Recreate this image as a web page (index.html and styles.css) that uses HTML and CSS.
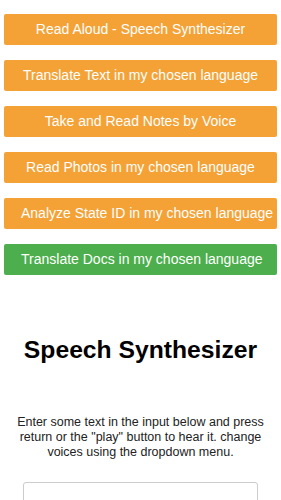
FILE: index.html
```html
<!DOCTYPE html>
<html lang="en">
<head>
  <meta charset="UTF-8" />
  <title>Speech Synthesizer</title>
  <meta name="viewport" content="width=device-width, initial-scale=1.0" />
  <link rel="stylesheet" href="styles.css">
</head>
<body>
  <!-- Nav buttons -->
  <div class="menu">
    <a class="btn" href="#">Read Aloud - Speech Synthesizer</a>
    <a class="btn" href="#">Translate Text in my chosen language</a>
    <a class="btn" href="#">Take and Read Notes by Voice</a>
    <a class="btn" href="#">Read Photos in my chosen language</a>
    <a class="btn" href="#">Analyze State ID in my chosen language</a>
    <a class="btn active" href="#">Translate Docs in my chosen language</a>
  </div>

  <!-- Synth -->
  <div class="synth">
    <h1>Speech Synthesizer</h1>
    <p>Enter some text in the input below and press return or the "play" button to hear it. change voices using the dropdown menu.</p>
    <form>
      <input type="text" class="txt">
    </form>
  </div>
</body>
</html>
```

FILE: styles.css
```css
/* ===== Basic Styles ===== */
body {
  margin: 0;
  font-family: "Liberation Sans", Arial, sans-serif;
  background: #fff;
  color: #000;
  overflow: hidden;
}
.menu {
  padding: 14px 4px 0;
  display: flex;
  flex-direction: column;
  gap: 15px;
}
.btn {
  display: block;
  height: 31px;
  line-height: 31px;
  padding: 0 17px;
  background: #f4a236;
  color: #fff;
  font-size: 14px;
  text-align: center;
  text-decoration: none;
  white-space: nowrap;
  border-radius: 2px;
}
.btn.active {
  background: #4cae4c;
}
.synth {
  text-align: center;
  padding: 0 12px;
}
h1 {
  font-size: 24.7px;
  font-weight: bold;
  margin: 61px 0 0;
}
p {
  font-size: 12.5px;
  line-height: 15px;
  color: #222;
  margin: 51px 0 0;
}
form {
  margin-top: 22px;
  padding: 0 11px;
}
.txt {
  width: 100%;
  box-sizing: border-box;
  height: 40px;
  border: 1px solid #ccc;
  border-radius: 3px;
}
```
